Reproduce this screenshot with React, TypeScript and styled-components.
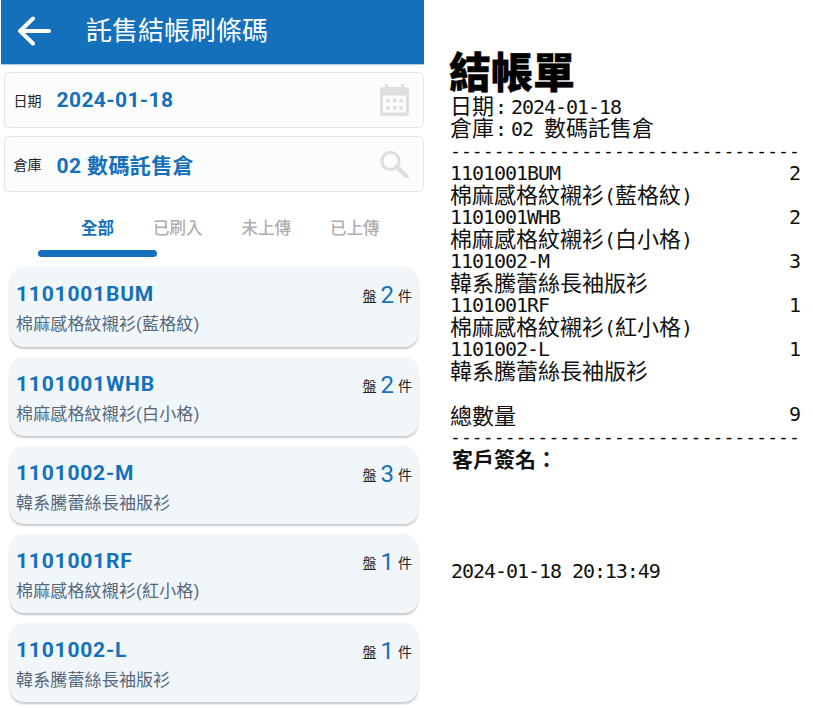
import React from "react";
import styled, { createGlobalStyle } from "styled-components";

const Global = createGlobalStyle`
  html, body { margin: 0; padding: 0; background: #fff; }
  body { font-family: Roboto, "Noto Sans CJK TC", sans-serif; }
`;

const Page = styled.div`
  display: flex;
  width: 813px;
  height: 708px;
  overflow: hidden;
  background: #fff;
`;

const Phone = styled.div`
  width: 423px;
  margin-left: 1px;
  display: flex;
  flex-direction: column;
  flex: none;
`;

const Header = styled.header`
  height: 65px;
  background: #1570bb;
  border-bottom: 1px solid #a9cfe8;
  box-sizing: border-box;
  display: flex;
  align-items: center;
  padding: 0 0 2px 16px;
  color: #fff;
`;

const Title = styled.h1`
  margin: 0 0 0 35px;
  font-size: 26px;
  line-height: 32px;
  font-weight: 400;
  color: #fff;
`;

const Fields = styled.div`
  display: flex;
  flex-direction: column;
  gap: 8px;
  margin: 7px 0 0 2.5px;
`;

const Field = styled.div`
  height: 56px;
  box-sizing: border-box;
  display: flex;
  align-items: center;
  background: #fbfcfc;
  border: 1.5px solid #e4e6e6;
  border-radius: 5px;
  padding: 0 14px 0 9px;
`;

const FieldLabel = styled.span`
  width: 43px;
  flex: none;
  font-size: 14px;
  color: #222;
`;

const FieldValue = styled.span`
  flex: 1;
  font-size: 21px;
  font-weight: 700;
  letter-spacing: 0.4px;
  color: #1570bb;
`;

const Tabs = styled.nav`
  display: flex;
  gap: 39px;
  margin-top: 25px;
  padding-left: 80px;
`;

const Tab = styled.span<{ $active?: boolean }>`
  font-size: 16.5px;
  line-height: 24px;
  font-weight: ${(p) => (p.$active ? 700 : 500)};
  color: ${(p) => (p.$active ? "#1570bb" : "#aeaeae")};
`;

const Indicator = styled.div`
  width: 119px;
  height: 7px;
  margin: 9px 0 0 37px;
  border-radius: 4px;
  background: #1570bb;
`;

const List = styled.div`
  display: flex;
  flex-direction: column;
  gap: 10px;
  margin: 10px 6px 0 9px;
`;

const Card = styled.div<{ $h: number }>`
  height: ${(p) => p.$h}px;
  box-sizing: border-box;
  background: #f1f6fb;
  border-radius: 14px;
  box-shadow: 0 2px 2px rgba(0, 0, 0, 0.22);
  padding: 13px 6px 0 6px;
`;

const CardTop = styled.div`
  display: flex;
  justify-content: space-between;
  align-items: center;
  height: 28px;
`;

const Code = styled.span`
  font-size: 21px;
  font-weight: 700;
  letter-spacing: 0.8px;
  color: #1570bb;
`;

const Qty = styled.span`
  display: flex;
  align-items: center;
  gap: 4px;
  padding-top: 2px;
  font-size: 14px;
  color: #222;
`;

const QtyNum = styled.span`
  font-size: 24px;
  line-height: 26px;
  color: #1570bb;
`;

const Name = styled.div`
  margin-top: 4px;
  font-size: 17px;
  line-height: 24px;
  letter-spacing: 0.15px;
  color: #566779;
`;

const Receipt = styled.div`
  width: 350px;
  margin: 45px 0 0 26px;
  flex: none;
  display: flex;
  flex-direction: column;
  color: #111;
  font-family: "Noto Sans CJK TC", sans-serif;
  font-size: 22px;
  line-height: 22px;
`;

const ReceiptTitle = styled.div`
  margin-left: -1px;
  font-size: 42px;
  line-height: 49px;
  font-weight: 900;
  color: #000;
  -webkit-text-stroke: 0.4px #000;
`;

const Mono = styled.span`
  font-family: "DejaVu Sans Mono", monospace;
  font-size: 20px;
  letter-spacing: -1.05px;
`;

const Colon = styled(Mono)`
  padding: 0 5px 0 1px;
`;

const RLine = styled.div`
  height: 22px;
  white-space: nowrap;
`;

const RText = styled(RLine)`
  line-height: 20px;
`;

const RRow = styled(RLine)`
  display: flex;
  justify-content: space-between;
`;

const CodeRow = styled(RRow)`
  line-height: 24px;
`;

const Dash = styled(RLine)<{ $top?: number }>`
  margin-top: ${(p) => p.$top ?? 0}px;
  font-family: "DejaVu Sans Mono", monospace;
  font-size: 18px;
  line-height: 24px;
  letter-spacing: 0.1px;
  color: #000;
  overflow: hidden;
`;

const Gap = styled.div<{ $h: number }>`
  height: ${(p) => p.$h}px;
`;

const Sign = styled(RLine)`
  font-size: 21px;
  font-weight: 700;
  margin-left: 2px;
`;

const Stamp = styled(RLine)`
  margin-left: 1px;
`;

const items = [
  { code: "1101001BUM", name: "棉麻感格紋襯衫(藍格紋)", qty: 2, h: 80 },
  { code: "1101001WHB", name: "棉麻感格紋襯衫(白小格)", qty: 2, h: 79 },
  { code: "1101002-M", name: "韓系騰蕾絲長袖版衫", qty: 3, h: 78 },
  { code: "1101001RF", name: "棉麻感格紋襯衫(紅小格)", qty: 1, h: 79 },
  { code: "1101002-L", name: "韓系騰蕾絲長袖版衫", qty: 1, h: 79 },
];

const BackIcon = () => (
  <svg width="34" height="30" viewBox="0 0 34 30" fill="none" stroke="#fff" strokeWidth="4" strokeLinecap="round" strokeLinejoin="round">
    <path d="M3 15H32M16 2.5L3 15L16 27.5" />
  </svg>
);

const CalendarIcon = () => (
  <svg width="29" height="32" viewBox="0 0 29 32" fill="#dedede">
    <rect x="5" y="0" width="3" height="6" rx="1" />
    <rect x="21" y="0" width="3" height="6" rx="1" />
    <rect x="0" y="3" width="29" height="29" rx="3.5" />
    <rect x="3" y="11.5" width="23" height="17" rx="1" fill="#fbfcfc" />
    <rect x="6.5" y="15" width="3.5" height="3.5" />
    <rect x="13" y="15" width="3.5" height="3.5" />
    <rect x="19.5" y="15" width="3.5" height="3.5" />
    <rect x="6.5" y="22" width="3.5" height="3.5" />
    <rect x="13" y="22" width="3.5" height="3.5" />
    <rect x="19.5" y="22" width="3.5" height="3.5" />
  </svg>
);

const SearchIcon = () => (
  <svg width="29" height="27" viewBox="0 0 29 27" fill="none" stroke="#dedede">
    <circle cx="10.5" cy="10" r="8.6" strokeWidth="3" />
    <path d="M16.5 16L27 25.5" strokeWidth="4" strokeLinecap="round" />
  </svg>
);

const receiptName = (name: string) =>
  name.split(/([()])/).map((part, i) =>
    part === "(" || part === ")" ? <Mono key={i}>{part}</Mono> : part
  );

export default function App() {
  return (
    <Page>
      <Global />
      <Phone>
        <Header>
          <BackIcon />
          <Title>託售結帳刷條碼</Title>
        </Header>
        <Fields>
          <Field>
            <FieldLabel>日期</FieldLabel>
            <FieldValue>2024-01-18</FieldValue>
            <CalendarIcon />
          </Field>
          <Field>
            <FieldLabel>倉庫</FieldLabel>
            <FieldValue>02 數碼託售倉</FieldValue>
            <SearchIcon />
          </Field>
        </Fields>
        <Tabs>
          <Tab $active>全部</Tab>
          <Tab>已刷入</Tab>
          <Tab>未上傳</Tab>
          <Tab>已上傳</Tab>
        </Tabs>
        <Indicator />
        <List>
          {items.map((it) => (
            <Card key={it.code} $h={it.h}>
              <CardTop>
                <Code>{it.code}</Code>
                <Qty>
                  盤<QtyNum>{it.qty}</QtyNum>件
                </Qty>
              </CardTop>
              <Name>{it.name}</Name>
            </Card>
          ))}
        </List>
      </Phone>
      <Receipt>
        <ReceiptTitle>結帳單</ReceiptTitle>
        <RText>
          日期<Colon>:</Colon>
          <Mono>2024-01-18</Mono>
        </RText>
        <RText>
          倉庫<Colon>:</Colon>
          <Mono>02 </Mono>數碼託售倉
        </RText>
        <Dash $top={1}>{"-".repeat(32)}</Dash>
        {items.map((it) => (
          <React.Fragment key={it.code}>
            <CodeRow>
              <Mono>{it.code}</Mono>
              <Mono>{it.qty}</Mono>
            </CodeRow>
            <RText>{receiptName(it.name)}</RText>
          </React.Fragment>
        ))}
        <Gap $h={22} />
        <RRow>
          <span>總數量</span>
          <Mono>9</Mono>
        </RRow>
        <Dash>{"-".repeat(32)}</Dash>
        <Sign>客戶簽名：</Sign>
        <Gap $h={88} />
        <Stamp>
          <Mono>2024-01-18 20:13:49</Mono>
        </Stamp>
      </Receipt>
    </Page>
  );
}
